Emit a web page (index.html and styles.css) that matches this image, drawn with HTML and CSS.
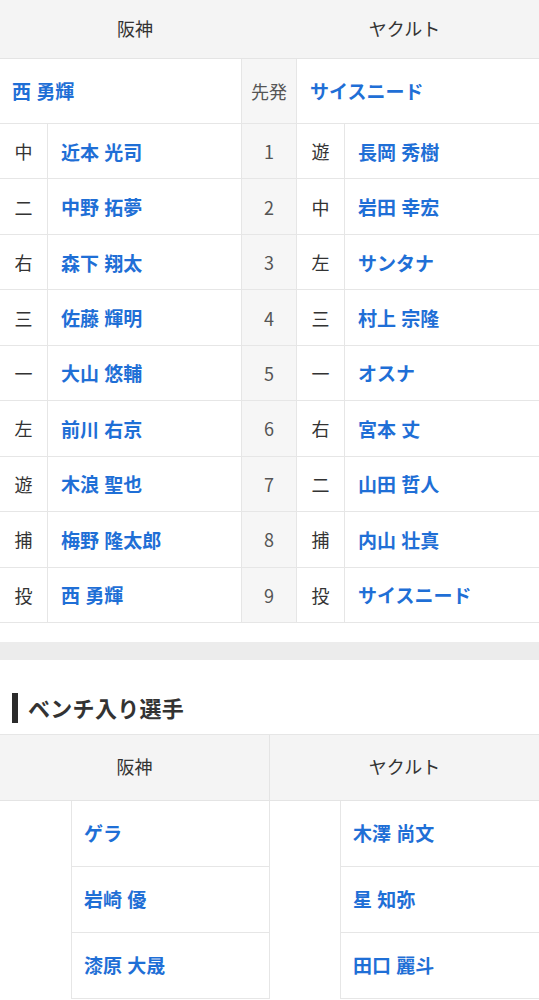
FILE: index.html
```html
<!DOCTYPE html>
<html lang="ja">
<head>
<meta charset="utf-8">
<link rel="stylesheet" href="styles.css">
</head>
<body>
<div class="heads">
  <div class="team-head">阪神</div>
  <div class="team-head">ヤクルト</div>
</div>
<div class="lineup">
  <div class="starter name-left"><a>西 勇輝</a></div>
  <div class="mid">先発</div>
  <div class="starter name-right"><a>サイスニード</a></div>

  <div class="pos">中</div><div class="name"><a>近本 光司</a></div><div class="mid">1</div><div class="pos">遊</div><div class="name last"><a>長岡 秀樹</a></div>
  <div class="pos">二</div><div class="name"><a>中野 拓夢</a></div><div class="mid">2</div><div class="pos">中</div><div class="name last"><a>岩田 幸宏</a></div>
  <div class="pos">右</div><div class="name"><a>森下 翔太</a></div><div class="mid">3</div><div class="pos">左</div><div class="name last"><a>サンタナ</a></div>
  <div class="pos">三</div><div class="name"><a>佐藤 輝明</a></div><div class="mid">4</div><div class="pos">三</div><div class="name last"><a>村上 宗隆</a></div>
  <div class="pos">一</div><div class="name"><a>大山 悠輔</a></div><div class="mid">5</div><div class="pos">一</div><div class="name last"><a>オスナ</a></div>
  <div class="pos">左</div><div class="name"><a>前川 右京</a></div><div class="mid">6</div><div class="pos">右</div><div class="name last"><a>宮本 丈</a></div>
  <div class="pos">遊</div><div class="name"><a>木浪 聖也</a></div><div class="mid">7</div><div class="pos">二</div><div class="name last"><a>山田 哲人</a></div>
  <div class="pos">捕</div><div class="name"><a>梅野 隆太郎</a></div><div class="mid">8</div><div class="pos">捕</div><div class="name last"><a>内山 壮真</a></div>
  <div class="pos">投</div><div class="name"><a>西 勇輝</a></div><div class="mid">9</div><div class="pos">投</div><div class="name last"><a>サイスニード</a></div>
</div>

<div class="band"></div>

<h2 class="section-title">ベンチ入り選手</h2>

<div class="bench">
  <div class="bench-head">阪神</div>
  <div class="bench-head last">ヤクルト</div>

  <div class="blank"></div><div class="bname"><a>ゲラ</a></div>
  <div class="blank"></div><div class="bname last"><a>木澤 尚文</a></div>
  <div class="blank"></div><div class="bname"><a>岩崎 優</a></div>
  <div class="blank"></div><div class="bname last"><a>星 知弥</a></div>
  <div class="blank"></div><div class="bname"><a>漆原 大晟</a></div>
  <div class="blank"></div><div class="bname last"><a>田口 麗斗</a></div>
</div>
</body>
</html>
```

FILE: styles.css
```css
* { box-sizing: border-box; }

html, body {
  margin: 0;
  padding: 0;
  background: #fff;
}

body {
  font-family: "Noto Sans CJK JP", "Noto Sans", sans-serif;
  color: #333;
  width: 539px;
  overflow: hidden;
}

a {
  color: #1f6fd6;
  font-weight: 700;
  text-decoration: none;
  word-spacing: 1px;
}

.heads {
  display: flex;
  height: 59px;
  background: #f4f4f4;
  border-bottom: 1px solid #e4e4e4;
}

.team-head {
  flex: 0 0 270px;
  display: flex;
  align-items: center;
  justify-content: center;
  font-size: 18px;
  color: #333;
  padding-bottom: 3px;
}
.team-head + .team-head { flex: 1 1 auto; }

.lineup {
  display: grid;
  grid-template-columns: 48px 194px 55px 48px 194px;
  grid-template-rows: 65px repeat(9, 55.45px);
}

.starter {
  grid-column: span 2;
  display: flex;
  align-items: center;
  font-size: 19px;
  border-bottom: 1px solid #e6e6e6;
  padding-bottom: 1px;
}
.name-left { padding-left: 12px; border-right: 1px solid #e6e6e6; }
.name-right { padding-left: 13px; }

.mid {
  background: #f6f6f6;
  border-right: 1px solid #e6e6e6;
  border-bottom: 1px solid #e6e6e6;
  display: flex;
  align-items: center;
  justify-content: center;
  font-size: 18px;
  color: #555;
}

.pos {
  border-right: 1px solid #e6e6e6;
  border-bottom: 1px solid #e6e6e6;
  display: flex;
  align-items: center;
  justify-content: center;
  font-size: 18px;
  color: #333;
}

.name {
  border-right: 1px solid #e6e6e6;
  border-bottom: 1px solid #e6e6e6;
  display: flex;
  align-items: center;
  padding-left: 13px;
  font-size: 19px;
}
.name.last { border-right: none; }

.band {
  margin-top: 19px;
  height: 18px;
  background: #ececec;
}

.section-title {
  margin: 33px 0 0 12px;
  padding-left: 10px;
  border-left: 6px solid #2b2b2b;
  height: 30px;
  line-height: 29px;
  font-size: 22px;
  font-weight: 700;
  color: #333;
  letter-spacing: 0.3px;
}

.bench {
  margin-top: 11px;
  display: grid;
  grid-template-columns: 71px 199px 70px 199px;
  grid-template-rows: 66px repeat(3, 66px);
  border-top: 1px solid #e6e6e6;
}

.bench-head {
  grid-column: span 2;
  background: #f4f4f4;
  border-bottom: 1px solid #e4e4e4;
  border-right: 1px solid #e4e4e4;
  display: flex;
  align-items: center;
  justify-content: center;
  font-size: 18px;
  color: #333;
  padding-bottom: 2px;
}
.bench-head.last { border-right: none; }

.blank { background: #fff; }

.bname {
  border-left: 1px solid #e6e6e6;
  border-right: 1px solid #e6e6e6;
  border-bottom: 1px solid #e6e6e6;
  display: flex;
  align-items: center;
  padding-left: 12px;
  padding-bottom: 2px;
  font-size: 19px;
}
.bname.last { border-right: none; }
```
